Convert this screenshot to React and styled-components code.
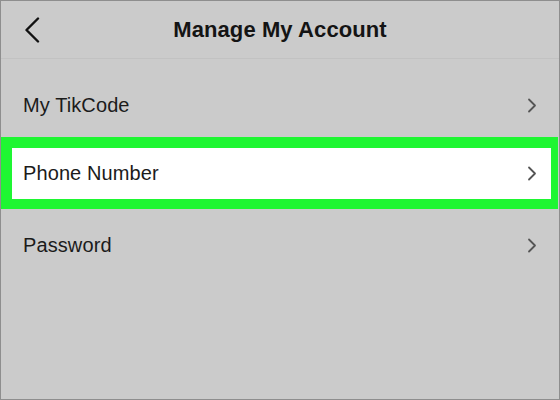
import React from "react";
import styled, { createGlobalStyle } from "styled-components";

const Global = createGlobalStyle`
  html, body { margin: 0; padding: 0; background: #cbcbcb; }
  body { font-family: "Liberation Sans", Arial, sans-serif; }
`;

const Screen = styled.div`
  box-sizing: border-box;
  width: 560px;
  height: 400px;
  border: 1px solid #8e8e8e;
  background: #cbcbcb;
  display: flex;
  flex-direction: column;
  overflow: hidden;
`;

const Header = styled.header`
  box-sizing: border-box;
  height: 58px;
  display: grid;
  grid-template-columns: 60px 1fr 60px;
  align-items: center;
  border-bottom: 1px solid #c2c2c2;
`;

const BackButton = styled.button`
  border: 0;
  background: none;
  padding: 0 0 0 23px;
  display: flex;
  align-items: center;
  height: 100%;
  cursor: pointer;
`;

const Title = styled.h1`
  margin: 0;
  text-align: center;
  font-family: "Liberation Sans", Arial, sans-serif;
  font-weight: 700;
  font-size: 22px;
  color: #141414;
  letter-spacing: 0.1px;
`;

const List = styled.div`
  display: flex;
  flex-direction: column;
  padding-top: 11px;
`;

const Row = styled.div`
  box-sizing: border-box;
  display: flex;
  align-items: center;
  justify-content: space-between;
  height: ${(p) => (p.$highlighted ? "72px" : "70px")};
  padding: ${(p) => (p.$highlighted ? "0 14px 0 11px" : "0 22px 0 22px")};
  margin: ${(p) => (p.$highlighted ? "-3px 1px 1px 0" : "0")};
  background: ${(p) => (p.$highlighted ? "#ffffff" : "transparent")};
  border-style: solid;
  border-color: #1ef632;
  border-width: ${(p) => (p.$highlighted ? "11px 7px 10px 11px" : "0")};
`;

const Label = styled.span`
  font-family: "Liberation Sans", Arial, sans-serif;
  font-size: 20px;
  color: #1b1b1b;
  letter-spacing: 0.1px;
`;

const Chevron = () => (
  <svg width="10" height="15" viewBox="0 0 10 15">
    <path d="M2 1.5 L8 7.5 L2 13.5" fill="none" stroke="#555" strokeWidth="1.8" strokeLinecap="round" strokeLinejoin="round" />
  </svg>
);

const BackIcon = () => (
  <svg width="16" height="26" viewBox="0 0 16 26">
    <path d="M14 1.5 L2.5 13 L14 24.5" fill="none" stroke="#111" strokeWidth="2.4" strokeLinecap="round" strokeLinejoin="round" />
  </svg>
);

const items = [
  { label: "My TikCode" },
  { label: "Phone Number", highlighted: true },
  { label: "Password" },
];

export default function App() {
  return (
    <>
      <Global />
      <Screen>
        <Header>
          <BackButton aria-label="Back">
            <BackIcon />
          </BackButton>
          <Title>Manage My Account</Title>
          <span />
        </Header>
        <List>
          {items.map((it) => (
            <Row key={it.label} $highlighted={it.highlighted}>
              <Label>{it.label}</Label>
              <Chevron />
            </Row>
          ))}
        </List>
      </Screen>
    </>
  );
}
